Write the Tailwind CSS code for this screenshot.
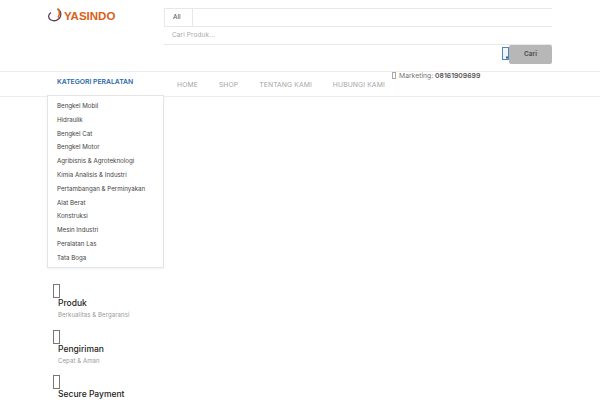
<!DOCTYPE html>
<html lang="id">

<head>
    <meta charset="UTF-8">
    <title>Yasindo</title>
    <script src="https://cdn.jsdelivr.net/npm/@tailwindcss/browser@4"></script>
</head>

<body class="bg-white w-[600px] h-[400px] overflow-hidden font-['Inter',sans-serif]">
    <!-- header -->
    <header class="h-[72px] border-b border-[#ededed] flex pl-[47px] pr-[48px]">
        <div class="w-[117px] pt-[8px] flex items-start">
            <svg class="w-[17px] h-[14px]" viewBox="0 0 17 14" fill="none">
                <path d="M4 4.500C0.800 6.500 0.800 10.500 4 12C7.500 13.600 12 12.500 13.500 8.500C14.500 5.500 13 2.500 10.500 0.800" stroke="#5b3a55" stroke-width="1.300" />
                <path d="M10.500 0.800C12.500 3 13 6.500 11 9.500" stroke="#d9691e" stroke-width="1.600" />
            </svg>
            <span class="font-['Liberation_Sans',sans-serif] font-bold text-[11.500px] leading-[14px] text-[#d9601a] mt-[1px]">YASINDO</span>
        </div>
        <div class="w-[388px] pt-[8px] flex flex-col items-end">
            <div class="w-full h-[19px] border-y border-[#e8e8e8] flex">
                <div class="w-[29px] border-x border-[#e8e8e8] pl-[8px] text-[6.500px] leading-[17px] text-[#444]">All</div>
            </div>
            <div class="w-full h-[18px] border-b border-[#e8e8e8] pl-[8px] text-[6.500px] leading-[17px] text-[#aaa] tracking-[0.1px]">Cari Produk...</div>
            <div class="flex items-start">
                <svg class="w-[7px] h-[13px] mt-[2px]" viewBox="0 0 7 13" fill="none">
                    <rect x="0.500" y="0.500" width="6" height="12" fill="#eef5fb" stroke="#4f86b8" stroke-width="1" />
                    <rect x="4" y="9.500" width="2" height="2" fill="#2f5f8f" />
                </svg>
                <button class="w-[43px] h-[19px] bg-[#b7b7b7] rounded-[2px] text-[6.500px] font-bold text-[#555]">Cari</button>
            </div>
        </div>
    </header>

    <!-- navigation -->
    <nav class="h-[25px] border-b border-[#ededed] flex pl-[57px] relative">
        <div class="w-[120px] text-[6.800px] font-semibold leading-[19px] text-[#2a6aa8]">KATEGORI PERALATAN</div>
        <div class="flex gap-[21px] text-[6.800px] leading-[25px] text-[#a5a5a5] tracking-[0.1px]">
            <a>HOME</a>
            <a>SHOP</a>
            <a>TENTANG KAMI</a>
            <a>HUBUNGI KAMI</a>
        </div>
        <div class="absolute left-[392px] top-0 flex items-center h-[7px] text-[6.800px] text-[#777]">
            <span class="w-[4px] h-[7px] border border-[#aaa] mr-[3px]"></span>
            <span class="mt-[1px]">Marketing: <b class="font-semibold text-[#555]">08161909699</b></span>
        </div>
    </nav>

    <main class="pl-[47px]">
        <!-- kategori -->
        <ul class="w-[117px] h-[173px] -mt-[2px] relative bg-white border border-[#e4e4e4] shadow-[0_1px_2px_rgba(0,0,0,0.06)] pt-[3px] pl-[9px] text-[6.200px] leading-[13.800px] text-[#444]">
            <li>Bengkel Mobil</li>
            <li>Hidraulik</li>
            <li>Bengkel Cat</li>
            <li>Bengkel Motor</li>
            <li>Agribisnis &amp; Agroteknologi</li>
            <li>Kimia Analisis &amp; Industri</li>
            <li>Pertambangan &amp; Perminyakan</li>
            <li>Alat Berat</li>
            <li>Konstruksi</li>
            <li>Mesin Industri</li>
            <li>Peralatan Las</li>
            <li>Tata Boga</li>
        </ul>

        <!-- keunggulan -->
        <div class="pt-[16px] pl-[6px] flex flex-col gap-[12.500px]">
            <div class="h-[33px]">
                <div class="w-[7px] h-[14px] border border-[#777]"></div>
                <div class="ml-[5px] -mt-[1px] text-[8.500px] leading-[12px] font-medium text-[#222]">Produk</div>
                <div class="ml-[5px] mt-[1px] text-[6px] leading-[9px] text-[#999] tracking-[0.1px]">Berkualitas &amp; Bergaransi</div>
            </div>
            <div class="h-[33px]">
                <div class="w-[7px] h-[14px] border border-[#777]"></div>
                <div class="ml-[5px] -mt-[1px] text-[8.500px] leading-[12px] font-medium text-[#222]">Pengiriman</div>
                <div class="ml-[5px] mt-[1px] text-[6px] leading-[9px] text-[#999] tracking-[0.1px]">Cepat &amp; Aman</div>
            </div>
            <div class="h-[33px]">
                <div class="w-[7px] h-[14px] border border-[#777]"></div>
                <div class="ml-[5px] -mt-[1px] text-[8.500px] leading-[12px] font-medium text-[#222]">Secure Payment</div>
            </div>
        </div>
    </main>
</body>

</html>
